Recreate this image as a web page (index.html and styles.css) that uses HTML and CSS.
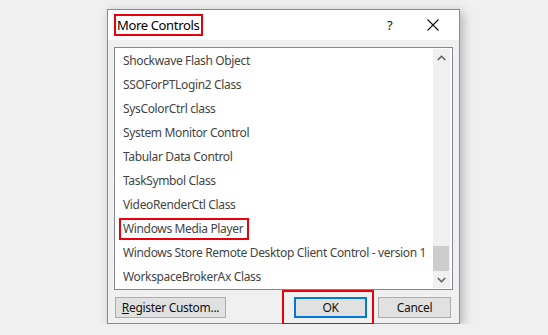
FILE: index.html
```html
<!DOCTYPE html>
<html lang="en">
<head>
  <meta charset="UTF-8">
  <title>More Controls</title>
  <link rel="stylesheet" href="styles.css">
</head>
<body>

  <div class="dialog">
    <!-- Title bar -->
    <div class="titlebar">
      <span class="title mark">More Controls</span>
      <span class="help">?</span>
      <span class="close">
        <svg width="12" height="12" viewBox="0 0 12 12"><path d="M0.5 0.5 L11.5 11.5 M11.5 0.5 L0.5 11.5" stroke="#111" stroke-width="1.1" fill="none"/></svg>
      </span>
    </div>

    <div class="body">
      <div class="listbox">
        <ul class="items">
          <li>Shockwave Flash Object</li>
          <li>SSOForPTLogin2 Class</li>
          <li>SysColorCtrl class</li>
          <li>System Monitor Control</li>
          <li>Tabular Data Control</li>
          <li>TaskSymbol Class</li>
          <li>VideoRenderCtl Class</li>
          <li><span class="mark item-mark">Windows Media Player</span></li>
          <li>Windows Store Remote Desktop Client Control - version 1</li>
          <li>WorkspaceBrokerAx Class</li>
        </ul>
        <div class="scrollbar">
          <div class="arrow">
            <svg width="9" height="6" viewBox="0 0 9 6"><path d="M0.8 5 L4.5 1.3 L8.2 5" stroke="#606060" stroke-width="1.6" fill="none"/></svg>
          </div>
          <div class="track">
            <div class="thumb"></div>
          </div>
          <div class="arrow">
            <svg width="9" height="6" viewBox="0 0 9 6"><path d="M0.8 1 L4.5 4.7 L8.2 1" stroke="#606060" stroke-width="1.6" fill="none"/></svg>
          </div>
        </div>
      </div>

      <div class="buttons">
        <button class="btn btn-register"><u>R</u>egister Custom...</button>
        <span class="ok-wrap">
          <button class="btn btn-ok">OK</button>
        </span>
        <button class="btn btn-cancel">Cancel</button>
      </div>
    </div>
  </div>

</body>
</html>
```

FILE: styles.css
```css
body {
  margin: 0;
  padding: 9px 0 0 107px;
  background-color: #f0f0f0;
  font-family: "Noto Sans", "Open Sans", sans-serif;
  font-size: 12px;
  letter-spacing: -0.35px;
  color: #444;
}

.dialog {
  box-sizing: border-box;
  width: 353px;
  height: 315px;
  border: 1px solid #8a8a8a;
  background-color: #f0f0f0;
  box-shadow: 3px 3px 10px rgba(0, 0, 0, 0.25);
  display: flex;
  flex-direction: column;
}

.titlebar {
  height: 30px;
  background-color: #fff;
  display: flex;
  align-items: center;
  padding-left: 6px;
}

.title {
  font-size: 13px;
  color: #000;
  line-height: 18px;
  padding: 0 2px 0 1px;
}

.mark {
  border: 2px solid #e8000b;
}

.help {
  margin-left: auto;
  font-size: 13px;
  color: #111;
  width: 14px;
}

.close {
  width: 12px;
  height: 12px;
  margin: 0 20px 0 26px;
  display: flex;
}

.body {
  flex: 1;
  padding: 7px 6px 0 6px;
  display: flex;
  flex-direction: column;
}

.listbox {
  box-sizing: border-box;
  width: 339px;
  height: 243px;
  border: 1px solid #828790;
  background-color: #fff;
  display: flex;
}

.items {
  list-style: none;
  margin: 0;
  padding: 1px 0 0 0;
  flex: 1;
}

.items li {
  height: 24px;
  line-height: 24px;
  padding-left: 8px;
  white-space: nowrap;
}

.item-mark {
  display: inline-block;
  line-height: 18px;
  padding: 0 4px 0 2px;
  margin-left: -4px;
}

.scrollbar {
  width: 17px;
  margin: 1px 2px 1px 0;
  background-color: #f0f0f0;
  display: flex;
  flex-direction: column;
}

.arrow {
  height: 17px;
  display: flex;
  align-items: center;
  justify-content: center;
}

.track {
  flex: 1;
  display: flex;
  flex-direction: column;
  justify-content: flex-end;
}

.thumb {
  height: 25px;
  margin: 0 1px 0 0;
  background-color: #cdcdcd;
}

.buttons {
  display: flex;
  align-items: center;
  margin-top: 7px;
  padding-left: 1px;
}

.btn {
  font-family: "Noto Sans", "Open Sans", sans-serif;
  font-size: 12px;
  letter-spacing: -0.3px;
  color: #111;
  background-color: #e1e1e1;
  border: 1px solid #adadad;
  height: 21px;
  padding: 0;
  border-radius: 0;
}

.btn-register {
  width: 111px;
}

.ok-wrap {
  position: relative;
  margin-left: 68px;
  display: flex;
}

.ok-wrap::after {
  content: "";
  position: absolute;
  top: -7px;
  bottom: -7px;
  left: -12px;
  right: -7px;
  border: 2px solid #e8000b;
}

.btn-ok {
  width: 73px;
  border: 2px solid #0078d7;
}

.btn-cancel {
  width: 73px;
  margin-left: 11px;
}
```
